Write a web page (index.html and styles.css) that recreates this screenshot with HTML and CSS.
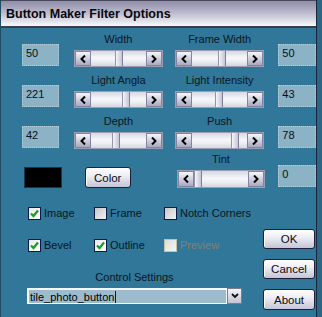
FILE: index.html
```html
<!DOCTYPE html>
<html lang="en">
<head>
  <meta charset="UTF-8">
  <title>Button Maker Filter Options</title>
  <link rel="stylesheet" href="styles.css">
</head>
<body>
  <div class="window">
    <div class="titlebar">Button Maker Filter Options</div>

    <div class="content">
      <!-- Slider rows -->
      <div class="row first-row">
        <div class="numbox">50</div>
        <div class="control">
          <div class="label">Width</div>
          <div class="scroll">
            <span class="arrow"><svg width="6" height="8" viewBox="0 0 6 8"><polyline points="5,0.5 1.5,4 5,7.5" /></svg></span>
            <span class="track"><span class="thumb" style="left:24px"></span></span>
            <span class="arrow"><svg width="6" height="8" viewBox="0 0 6 8"><polyline points="1,0.5 4.5,4 1,7.5" /></svg></span>
          </div>
        </div>
        <div class="control">
          <div class="label">Frame Width</div>
          <div class="scroll">
            <span class="arrow"><svg width="6" height="8" viewBox="0 0 6 8"><polyline points="5,0.5 1.5,4 5,7.5" /></svg></span>
            <span class="track"><span class="thumb" style="left:26px"></span></span>
            <span class="arrow"><svg width="6" height="8" viewBox="0 0 6 8"><polyline points="1,0.5 4.5,4 1,7.5" /></svg></span>
          </div>
        </div>
        <div class="numbox right">50</div>
      </div>

      <div class="row">
        <div class="numbox">221</div>
        <div class="control">
          <div class="label">Light Angla</div>
          <div class="scroll">
            <span class="arrow"><svg width="6" height="8" viewBox="0 0 6 8"><polyline points="5,0.5 1.5,4 5,7.5" /></svg></span>
            <span class="track"><span class="thumb" style="left:31px"></span></span>
            <span class="arrow"><svg width="6" height="8" viewBox="0 0 6 8"><polyline points="1,0.5 4.5,4 1,7.5" /></svg></span>
          </div>
        </div>
        <div class="control">
          <div class="label">Light Intensity</div>
          <div class="scroll">
            <span class="arrow"><svg width="6" height="8" viewBox="0 0 6 8"><polyline points="5,0.5 1.5,4 5,7.5" /></svg></span>
            <span class="track"><span class="thumb" style="left:23px"></span></span>
            <span class="arrow"><svg width="6" height="8" viewBox="0 0 6 8"><polyline points="1,0.5 4.5,4 1,7.5" /></svg></span>
          </div>
        </div>
        <div class="numbox right">43</div>
      </div>

      <div class="row">
        <div class="numbox">42</div>
        <div class="control">
          <div class="label">Depth</div>
          <div class="scroll">
            <span class="arrow"><svg width="6" height="8" viewBox="0 0 6 8"><polyline points="5,0.5 1.5,4 5,7.5" /></svg></span>
            <span class="track"><span class="thumb" style="left:21px"></span></span>
            <span class="arrow"><svg width="6" height="8" viewBox="0 0 6 8"><polyline points="1,0.5 4.5,4 1,7.5" /></svg></span>
          </div>
        </div>
        <div class="control">
          <div class="label">Push</div>
          <div class="scroll">
            <span class="arrow"><svg width="6" height="8" viewBox="0 0 6 8"><polyline points="5,0.5 1.5,4 5,7.5" /></svg></span>
            <span class="track"><span class="thumb" style="left:39px"></span></span>
            <span class="arrow"><svg width="6" height="8" viewBox="0 0 6 8"><polyline points="1,0.5 4.5,4 1,7.5" /></svg></span>
          </div>
        </div>
        <div class="numbox right">78</div>
      </div>

      <!-- Colour + tint -->
      <div class="row color-row">
        <div class="swatch"></div>
        <button class="btn color-btn">Color</button>
        <div class="control tint">
          <div class="label">Tint</div>
          <div class="scroll">
            <span class="arrow"><svg width="6" height="8" viewBox="0 0 6 8"><polyline points="5,0.5 1.5,4 5,7.5" /></svg></span>
            <span class="track"><span class="thumb" style="left:0px"></span></span>
            <span class="arrow"><svg width="6" height="8" viewBox="0 0 6 8"><polyline points="1,0.5 4.5,4 1,7.5" /></svg></span>
          </div>
        </div>
        <div class="numbox tint-box">0</div>
      </div>

      <!-- Options and buttons -->
      <div class="lower">
        <div class="options">
          <div class="check-row">
            <label class="check wide"><span class="box checked"><svg width="11" height="11" viewBox="0 0 11 11"><polyline points="2,5.5 4.5,8 9,2.5" /></svg></span>Image</label>
            <label class="check wider"><span class="box"></span>Frame</label>
            <label class="check"><span class="box"></span>Notch Corners</label>
          </div>
          <div class="check-row">
            <label class="check wide"><span class="box checked"><svg width="11" height="11" viewBox="0 0 11 11"><polyline points="2,5.5 4.5,8 9,2.5" /></svg></span>Bevel</label>
            <label class="check wider"><span class="box checked"><svg width="11" height="11" viewBox="0 0 11 11"><polyline points="2,5.5 4.5,8 9,2.5" /></svg></span>Outline</label>
            <label class="check disabled"><span class="box"></span>Preview</label>
          </div>

          <div class="settings-label">Control Settings</div>
          <div class="combo">
            <span class="combo-text">tile_photo_button<span class="caret"></span></span>
            <span class="combo-btn"><svg width="8" height="6" viewBox="0 0 8 6"><polyline points="1,1 4,4 7,1" /></svg></span>
          </div>
        </div>

        <div class="actions">
          <button class="btn">OK</button>
          <button class="btn">Cancel</button>
          <button class="btn about">About</button>
        </div>
      </div>
    </div>
  </div>
</body>
</html>
```

FILE: styles.css
```css
/* General */
body {
  margin: 0;
  background: #2b6684;
  font-family: 'Liberation Sans', Arial, sans-serif;
  font-size: 11px;
  color: #0a1622;
}

.window {
  width: 315px;
  height: 317px;
  background: #30779a;
  border-left: 1px solid #1f4a62;
  border-right: 1px solid #16283a;
  overflow: hidden;
}

/* Title bar */
.titlebar {
  height: 25px;
  line-height: 26px;
  padding-left: 5px;
  font-size: 12.5px;
  font-weight: bold;
  color: #08080c;
  background: linear-gradient(#8f8da8, #b9b8cc 45%, #e6e6ee 85%, #fafafc);
  border-top: 1px solid #4a4a5e;
  border-bottom: 2px solid #3a3a50;
}

.content {
  padding-left: 21px;
}

/* Slider rows */
.row {
  display: flex;
  align-items: flex-end;
  margin-top: 7px;
}

.first-row {
  margin-top: 5px;
}

.numbox {
  width: 32px;
  height: 18px;
  padding: 2px 0 0 3px;
  margin-bottom: 1px;
  background: #8cb2c6;
  border: 1px dotted #b6ccd8;
  line-height: 13px;
  color: #05101a;
}

.numbox.right {
  width: 33px;
  margin-left: 14px;
}

.control {
  width: 90px;
  margin-left: 15px;
}

.control + .control {
  margin-left: 12px;
}

.label {
  line-height: 13px;
  margin-bottom: 4px;
  text-align: center;
}

.scroll {
  display: flex;
  height: 15px;
  border: 1px solid #9b9db2;
  background: #e4e6ec;
}

.arrow {
  width: 14px;
  display: flex;
  align-items: center;
  justify-content: center;
  border: 1px solid #8284a0;
  background: linear-gradient(#f6f6fa, #c8c8da 60%, #a9a9c0);
}

.arrow svg polyline {
  fill: none;
  stroke: #000;
  stroke-width: 2;
}

.track {
  flex: 1;
  position: relative;
  background: linear-gradient(#d6d8e2, #f6f7fa 45%, #eceef2 70%, #d4d6e0);
}

.thumb {
  position: absolute;
  top: 0;
  bottom: 0;
  width: 6px;
  border-left: 1px solid #9294aa;
  border-right: 1px solid #7e8098;
  background: linear-gradient(90deg, #f4f4f8, #c4c4d6);
}

/* Colour row */
.color-row {
  margin-top: 4px;
}

.swatch {
  width: 36px;
  height: 19px;
  margin-left: 2px;
  background: #000;
  border: 1px solid #123a4e;
}

.btn {
  width: 52px;
  height: 20px;
  padding: 0;
  font-family: 'Liberation Sans', Arial, sans-serif;
  font-size: 11.5px;
  color: #0a0a14;
  background: linear-gradient(#ffffff, #eeeef4 40%, #c4c4d6);
  border: 1px solid #1c2038;
  border-radius: 3px;
  box-shadow: inset 1px 1px 0 #ffffff;
}

.color-btn {
  width: 46px;
  height: 21px;
  margin-left: 23px;
}

.tint {
  width: 89px;
  margin-left: 46px;
}

.tint .scroll {
  height: 16px;
}

.numbox.tint-box {
  width: 33px;
  margin-left: 13px;
}

/* Options */
.lower {
  display: flex;
}

.options {
  width: 241px;
  padding-top: 18px;
}

.check-row {
  display: flex;
  padding-left: 6px;
  margin-bottom: 18px;
}

.check {
  display: flex;
  align-items: center;
  height: 14px;
  color: #0a1622;
}

.check.wide {
  width: 66px;
}

.check.wider {
  width: 70px;
}

.box {
  width: 11px;
  height: 11px;
  margin-right: 3px;
  border: 1px solid #0c1a48;
  background: linear-gradient(135deg, #c6c6c8, #f2f2f2);
}

.box.checked {
  background: linear-gradient(135deg, #e8e8ea, #ffffff);
}

.box svg {
  display: block;
}

.box svg polyline {
  fill: none;
  stroke: #1e9a24;
  stroke-width: 2.2;
}

.check.disabled {
  color: #84826a;
}

.check.disabled .box {
  border-color: #c4c0aa;
  background: linear-gradient(135deg, #dcdcd8, #f6f6f2);
}

.settings-label {
  width: 215px;
  margin: 5px 0 0 5px;
  line-height: 14px;
  text-align: center;
}

.combo {
  display: flex;
  width: 215px;
  height: 16px;
  margin: 4px 0 0 5px;
}

.combo-text {
  flex: 1;
  display: flex;
  align-items: center;
  padding-left: 1px;
  background: #9cbccd;
  border: 1px solid #f4f8fa;
  border-width: 2px 1px 1px 2px;
  color: #000;
}

.caret {
  width: 1px;
  height: 12px;
  margin-left: 1px;
  background: #1a1a1a;
}

.combo-btn {
  width: 13px;
  display: flex;
  align-items: center;
  justify-content: center;
  border: 1px solid #7a7c90;
  background: linear-gradient(#f4f4f8, #c2c2d2);
}

.combo-btn svg polyline {
  fill: none;
  stroke: #101018;
  stroke-width: 1.8;
}

.actions {
  display: flex;
  flex-direction: column;
  gap: 10px;
  padding-top: 41px;
}

.actions .about {
  height: 21px;
}
```
